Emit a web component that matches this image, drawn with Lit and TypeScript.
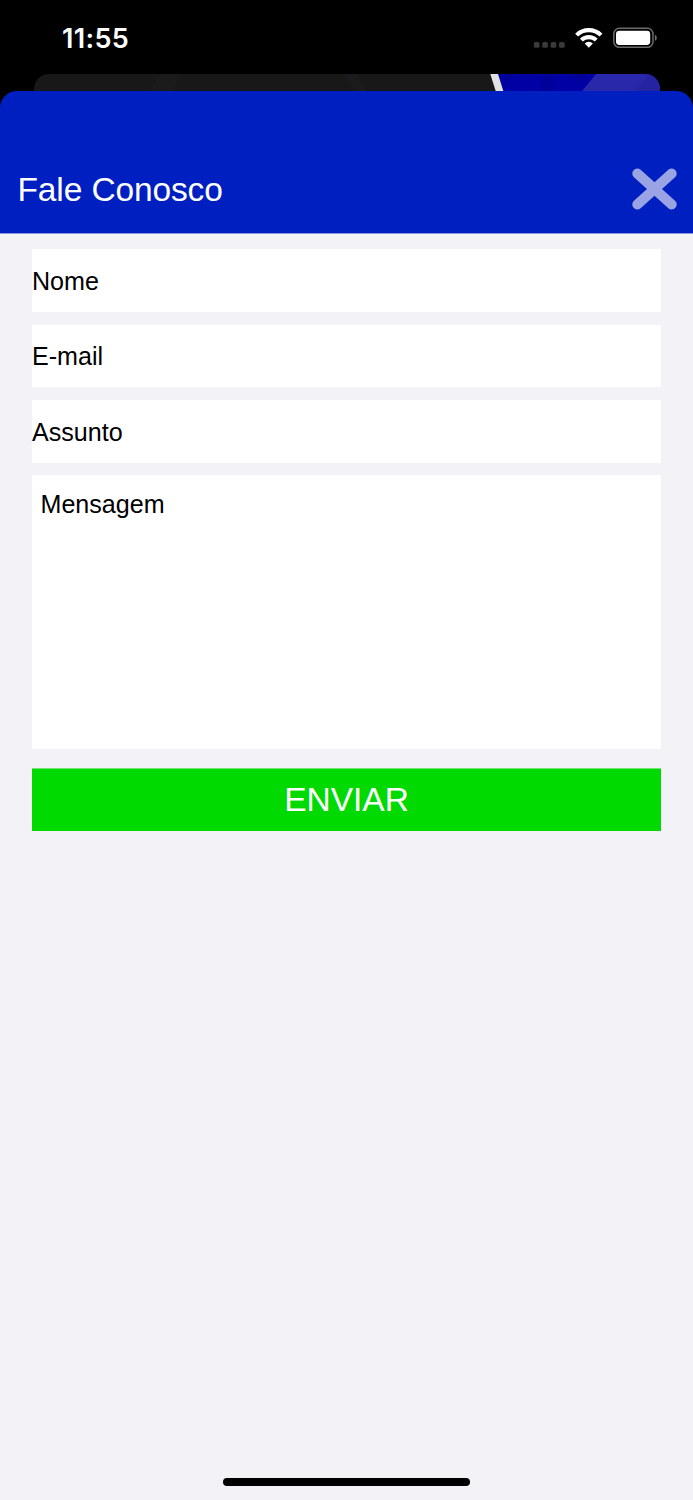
import { LitElement, html, css } from "lit";
import { customElement } from "lit/decorators.js";

@customElement("status-bar")
class StatusBar extends LitElement {
  static styles = css`
    :host {
      display: flex;
      justify-content: space-between;
      box-sizing: border-box;
      height: 74px;
      padding: 21px 35px 0 62px;
      background: #000;
      color: #fff;
    }
    .time {
      padding-top: 1px;
      font: 600 27px/34px Inter, sans-serif;
      letter-spacing: 0.35px;
    }
    .icons {
      display: block;
      width: 126px;
      height: 34px;
    }
  `;

  render() {
    return html`
      <span class="time">11:55</span>
      <svg class="icons" viewBox="532 21 126 34" fill="none">
        <g fill="#3a3a3a">
          <rect x="533.8" y="42" width="5.7" height="5.8" rx="1.6" />
          <rect x="542.2" y="42" width="5.7" height="5.8" rx="1.6" />
          <rect x="550.6" y="42" width="5.7" height="5.8" rx="1.6" />
          <rect x="559" y="42" width="5.7" height="5.8" rx="1.6" />
        </g>
        <g stroke="#fff" stroke-width="4.1">
          <path d="M576.6 35.1a17.5 17.5 0 0 1 24.4 0" />
          <path d="M581.4 40.1a10.6 10.6 0 0 1 14.8 0" />
        </g>
        <path d="M588.8 47.8l-4.1-4.3a5.9 5.9 0 0 1 8.2 0z" fill="#fff" />
        <rect x="613.8" y="28.3" width="39.2" height="19" rx="5.6" stroke="#6b6b6b" stroke-width="1.5" />
        <rect x="616" y="30.8" width="34.2" height="14.2" rx="3.4" fill="#fff" />
        <path d="M655 34.8c2.3.9 2.3 5.2 0 6.1z" fill="#757575" />
      </svg>
    `;
  }
}

@customElement("app-root")
class AppRoot extends LitElement {
  static styles = css`
    :host {
      display: flex;
      flex-direction: column;
      width: 693px;
      height: 1500px;
      overflow: hidden;
      background: #000;
      font-family: "Liberation Sans", Arial, sans-serif;
    }
    .behind {
      display: block;
      flex: none;
      width: 625.5px;
      height: 17px;
      margin-left: 34px;
      border-radius: 15px 15px 0 0;
      background: #181818;
    }
    .header {
      flex: none;
      display: flex;
      justify-content: space-between;
      box-sizing: border-box;
      height: 142px;
      padding: 77px 16px 0 17.5px;
      border-radius: 17px 17px 0 0;
      background: #001fc0;
    }
    .content {
      flex: 1;
      display: flex;
      flex-direction: column;
      border-top: 1px solid #8b96de;
      background: #f2f2f7;
    }
    .title {
      margin: 0;
      padding-top: 1px;
      font-size: 33.5px;
      line-height: 42px;
      letter-spacing: -0.12px;
      font-weight: 400;
      color: #fff;
    }
    .close {
      width: 45px;
      height: 42px;
    }
    .form {
      display: grid;
      grid-template-rows: 63px 62px 63px 273px;
      row-gap: 13px;
      padding: 15px 32px 0;
      font-size: 25.1px;
      color: #000;
    }
    .field {
      background: #fff;
      line-height: 64px;
    }
    .email {
      line-height: 63px;
    }
    .message {
      margin-top: -1px;
      padding: 14px 8.5px 0;
      line-height: 30px;
    }
    .send {
      margin: 19px 32px 0;
      height: 63px;
      box-sizing: border-box;
      border-top: 1px solid #70e675;
      background: #00da00;
      color: #fff;
      font-size: 33.5px;
      line-height: 62px;
      text-align: center;
    }
    .home {
      width: 247.5px;
      height: 8.4px;
      margin: auto auto 13.6px;
      border-radius: 5px;
      background: #000;
    }
  `;

  render() {
    return html`
      <status-bar></status-bar>
      <svg class="behind" viewBox="34 74 625.5 17">
        <path d="M160 74h18l-4 17h-24z" fill="#1b1b1c" />
        <path d="M345 74h12l10 17h-12z" fill="#1b1b1d" />
        <path d="M497 74h163v17H502z" fill="#0000a4" />
        <path d="M499 74h16l-10 12zM545 74h9v17h-14zM570 74h18l-8 12z" fill="#00009a" />
        <path d="M596 74h64v17h-78z" fill="#2927aa" />
        <path d="M650 74h10v17h-25z" fill="#2523a0" />
        <path d="M490.3 74h7.7l5.3 17h-7.6z" fill="#e2e2e2" />
      </svg>
      <header class="header">
        <h1 class="title">Fale Conosco</h1>
        <svg class="close" viewBox="0 0 45 42">
          <path d="M5.3 5.5L39.7 36.5M39.7 5.5L5.3 36.5" stroke="#9aa4e5" stroke-width="10" stroke-linecap="round" />
        </svg>
      </header>
      <main class="content">
        <div class="form">
          <div class="field">Nome</div>
          <div class="field email">E-mail</div>
          <div class="field">Assunto</div>
          <div class="field message">Mensagem</div>
        </div>
        <div class="send">ENVIAR</div>
        <div class="home"></div>
      </main>
    `;
  }
}
